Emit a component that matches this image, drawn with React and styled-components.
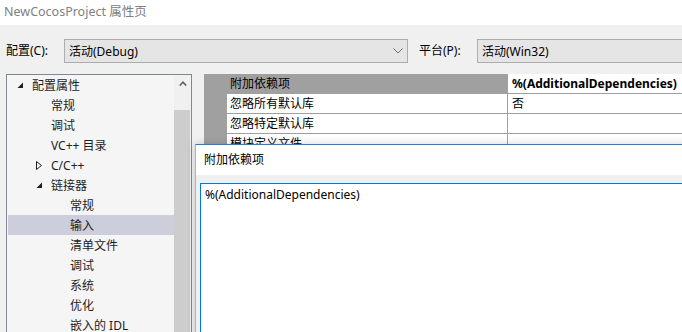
import React from 'react';
import styled, { createGlobalStyle } from 'styled-components';

const GlobalStyle = createGlobalStyle`
    html, body {
        margin: 0;
        padding: 0;
        width: 682px;
        height: 332px;
        overflow: hidden;
        background: #f0f0f0;
    }
    body {
        font-family: "Noto Sans", "Noto Sans CJK SC", sans-serif;
        font-size: 12px;
        color: #1e1e1e;
    }
`;

const treeItems = [
    { label: '配置属性', level: 1, arrow: 'open' },
    { label: '常规', level: 2 },
    { label: '调试', level: 2 },
    { label: 'VC++ 目录', level: 2 },
    { label: 'C/C++', level: 2, arrow: 'closed' },
    { label: '链接器', level: 2, arrow: 'open' },
    { label: '常规', level: 3 },
    { label: '输入', level: 3, selected: true },
    { label: '清单文件', level: 3 },
    { label: '调试', level: 3 },
    { label: '系统', level: 3 },
    { label: '优化', level: 3 },
    { label: '嵌入的 IDL', level: 3 },
];

const properties = [
    { name: '附加依赖项', value: '%(AdditionalDependencies)', selected: true },
    { name: '忽略所有默认库', value: '否' },
    { name: '忽略特定默认库', value: '' },
    { name: '模块定义文件', value: '' },
];

const Chevron = () => (
    <svg width="10" height="6" viewBox="0 0 10 6">
        <polyline points="0.5,0.5 5,5 9.5,0.5" fill="none" stroke="#707070" strokeWidth="1" />
    </svg>
);

const Expander = ({ type }) => {
    if (type === 'open') {
        return (
            <svg width="7" height="7" viewBox="0 0 7 7">
                <polygon points="6,0.5 6,6 0.5,6" fill="#1e1e1e" />
            </svg>
        );
    }
    if (type === 'closed') {
        return (
            <svg width="7" height="9" viewBox="0 0 7 9">
                <polygon points="0.5,0.5 5.5,4.5 0.5,8.5" fill="none" stroke="#1e1e1e" strokeWidth="1" />
            </svg>
        );
    }
    return null;
};

const PropertyPages = () => {
    return (
        <Window>
            <GlobalStyle />
            <TitleBar>NewCocosProject 属性页</TitleBar>

            <ConfigBar>
                <FieldLabel>配置(C):</FieldLabel>
                <Combo width="344px">
                    <span>活动(Debug)</span>
                    <Chevron />
                </Combo>
                <FieldLabel>平台(P):</FieldLabel>
                <Combo width="260px">
                    <span>活动(Win32)</span>
                </Combo>
            </ConfigBar>

            <Main>
                <TreePanel>
                    <TreeList>
                        {treeItems.map((item, index) => (
                            <TreeRow key={index} level={item.level} selected={item.selected}>
                                <ArrowSlot>
                                    <Expander type={item.arrow} />
                                </ArrowSlot>
                                {item.label}
                            </TreeRow>
                        ))}
                    </TreeList>
                    <ScrollBar>
                        <ScrollButton>
                            <svg width="8" height="5" viewBox="0 0 8 5">
                                <polyline points="0.8,4.5 4,1.2 7.2,4.5" fill="none" stroke="#606060" strokeWidth="1.6" />
                            </svg>
                        </ScrollButton>
                        <ScrollThumb />
                    </ScrollBar>
                </TreePanel>

                <Grid>
                    {properties.map((prop, index) => (
                        <GridRow key={index}>
                            <Gutter />
                            <NameCell selected={prop.selected}>{prop.name}</NameCell>
                            <ValueCell bold={prop.selected}>{prop.value}</ValueCell>
                        </GridRow>
                    ))}
                </Grid>
            </Main>

            <EditDialog>
                <DialogTitle>附加依赖项</DialogTitle>
                <DialogBody>
                    <EditBox>%(AdditionalDependencies)</EditBox>
                </DialogBody>
            </EditDialog>
        </Window>
    );
};

const Window = styled.div`
    position: relative;
    width: 682px;
    height: 332px;
    overflow: hidden;
    display: flex;
    flex-direction: column;
`;

const TitleBar = styled.div`
    height: 25px;
    flex-shrink: 0;
    background: #ffffff;
    color: #808080;
    padding-left: 4px;
    line-height: 23px;
    font-size: 12.5px;
`;

const ConfigBar = styled.div`
    height: 49px;
    flex-shrink: 0;
    display: flex;
    align-items: flex-start;
    padding: 14px 0 0 6px;
    box-sizing: border-box;
`;

const FieldLabel = styled.div`
    height: 24px;
    line-height: 24px;
    width: 58px;
    flex-shrink: 0;
    color: #000;

    & + div {
        margin-right: 11px;
    }
`;

const Combo = styled.div`
    width: ${props => props.width};
    height: 24px;
    flex-shrink: 0;
    box-sizing: border-box;
    border: 1px solid #adadad;
    background: #e5e5e5;
    display: flex;
    align-items: center;
    justify-content: space-between;
    padding: 0 4px 0 4px;
    color: #000;

    svg {
        margin-right: 0;
    }
`;

const Main = styled.div`
    flex: 1;
    display: flex;
    padding-left: 6px;
    min-height: 0;
`;

const TreePanel = styled.div`
    width: 186px;
    flex-shrink: 0;
    box-sizing: border-box;
    border: 1px solid #828790;
    border-bottom: none;
    background: #f5f5f5;
    display: flex;
    margin-right: 12px;
`;

const TreeList = styled.div`
    flex: 1;
    padding-left: 1px;
`;

const TreeRow = styled.div`
    height: 20px;
    display: flex;
    align-items: center;
    padding-left: ${props => 9 + (props.level - 1) * 19}px;
    background: ${props => (props.selected ? '#cccedb' : 'transparent')};
    white-space: nowrap;
`;

const ArrowSlot = styled.span`
    width: 15px;
    flex-shrink: 0;
    display: flex;
    align-items: center;
`;

const ScrollBar = styled.div`
    width: 17px;
    flex-shrink: 0;
    background: #f0f0f0;
    display: flex;
    flex-direction: column;
`;

const ScrollButton = styled.div`
    height: 17px;
    display: flex;
    align-items: center;
    justify-content: center;
`;

const ScrollThumb = styled.div`
    margin: 18px 1px 0 0;
    flex: 1;
    background: #cdcdcd;
`;

const Grid = styled.div`
    flex: 1;
    background: #a0a0a0;
    display: flex;
    flex-direction: column;
    gap: 1px;
`;

const GridRow = styled.div`
    height: 19px;
    display: grid;
    grid-template-columns: 22px 280px 1fr;
    column-gap: 1px;
`;

const Gutter = styled.div``;

const NameCell = styled.div`
    background: ${props => (props.selected ? 'transparent' : '#ffffff')};
    padding-left: 3px;
    line-height: 19px;
    color: #000;
    white-space: nowrap;
`;

const ValueCell = styled.div`
    background: #ffffff;
    padding-left: 4px;
    line-height: 19px;
    color: #000;
    font-weight: ${props => (props.bold ? 700 : 400)};
    white-space: nowrap;
    overflow: hidden;
`;

const EditDialog = styled.div`
    position: absolute;
    left: 195px;
    top: 144px;
    right: -20px;
    bottom: -20px;
    background: #f0f0f0;
    border-top: 1px solid #1f7fd6;
    border-left: 1px solid #9db7cf;
    box-shadow: 0 0 8px rgba(0, 0, 0, 0.18);
    display: flex;
    flex-direction: column;
`;

const DialogTitle = styled.div`
    height: 30px;
    flex-shrink: 0;
    background: #ffffff;
    padding-left: 8px;
    line-height: 30px;
    color: #000;
`;

const DialogBody = styled.div`
    flex: 1;
    display: flex;
    padding: 8px 0 0 4px;
`;

const EditBox = styled.div`
    flex: 1;
    background: #ffffff;
    border: 1px solid #0078d7;
    padding: 3px 4px;
    line-height: 16px;
    color: #000;
`;

export default PropertyPages;
